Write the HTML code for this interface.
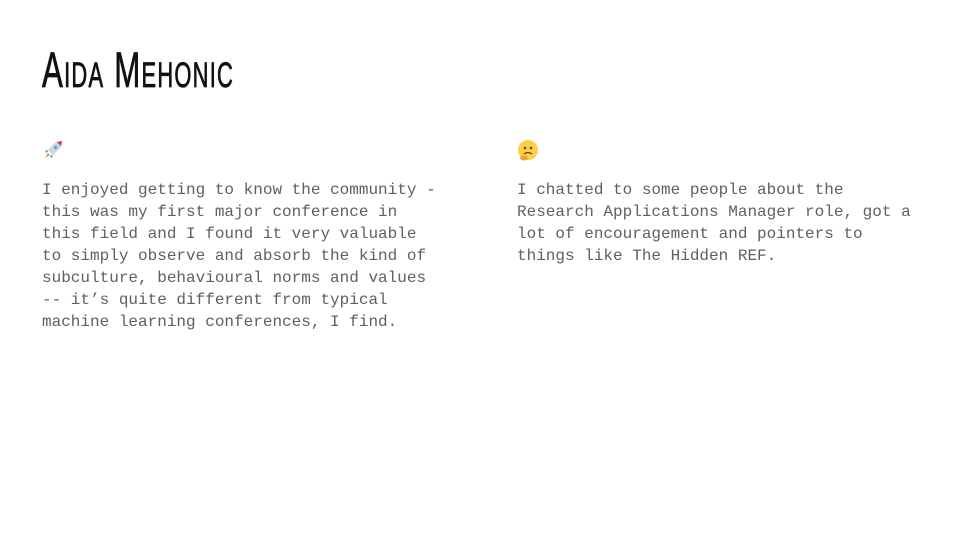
<!DOCTYPE html>
<html><head><meta charset="utf-8"><style>
html,body{margin:0;padding:0;background:#fff;}
body{width:960px;height:540px;position:relative;overflow:hidden;}
.t{position:absolute;left:42px;top:41px;font-family:"Liberation Sans Narrow","Liberation Sans",sans-serif;font-size:50px;color:#111;transform-origin:0 0;transform:scaleX(0.625);white-space:nowrap;font-variant:small-caps;letter-spacing:2px;-webkit-text-stroke:0.8px #111;}
.p{position:absolute;font-family:"Liberation Mono",monospace;font-size:16px;line-height:22px;color:#606060;white-space:pre;}
.e{position:absolute;}
</style></head><body>
<div class="t">Aida Mehonic</div>
<svg class="e" style="left:43px;top:139px" width="21" height="21" viewBox="0 0 21 21">
<path d="M19 2 L13 3 L5 11 L10 16 L18 8 Z" fill="#ccd6dd"/>
<path d="M19 2 L14 3 L18 7 Z" fill="#dd2e44"/>
<circle cx="12.5" cy="8.5" r="1.8" fill="#55acee"/>
<path d="M5 11 L2 12 L4 14 Z M10 16 L9 19 L7 17 Z" fill="#3b88c3"/>
<path d="M5 14 L2 19 L7 16 Z" fill="#f4900c"/>
</svg>
<svg class="e" style="left:517px;top:139px" width="22" height="22" viewBox="0 0 22 22">
<circle cx="11" cy="11" r="10" fill="#ffcc4d"/>
<circle cx="8" cy="9" r="1.3" fill="#664500"/><circle cx="14" cy="9" r="1.3" fill="#664500"/>
<path d="M7 15 Q11 12 15 15" stroke="#664500" stroke-width="1.2" fill="none"/>
<ellipse cx="7" cy="19" rx="4" ry="2.5" fill="#f4a52e"/>
</svg>
<div class="p" style="left:42px;top:179px">I enjoyed getting to know the community -
this was my first major conference in
this field and I found it very valuable
to simply observe and absorb the kind of
subculture, behavioural norms and values
-- it’s quite different from typical
machine learning conferences, I find.</div>
<div class="p" style="left:517px;top:179px">I chatted to some people about the
Research Applications Manager role, got a
lot of encouragement and pointers to
things like The Hidden REF.</div>
</body></html>
